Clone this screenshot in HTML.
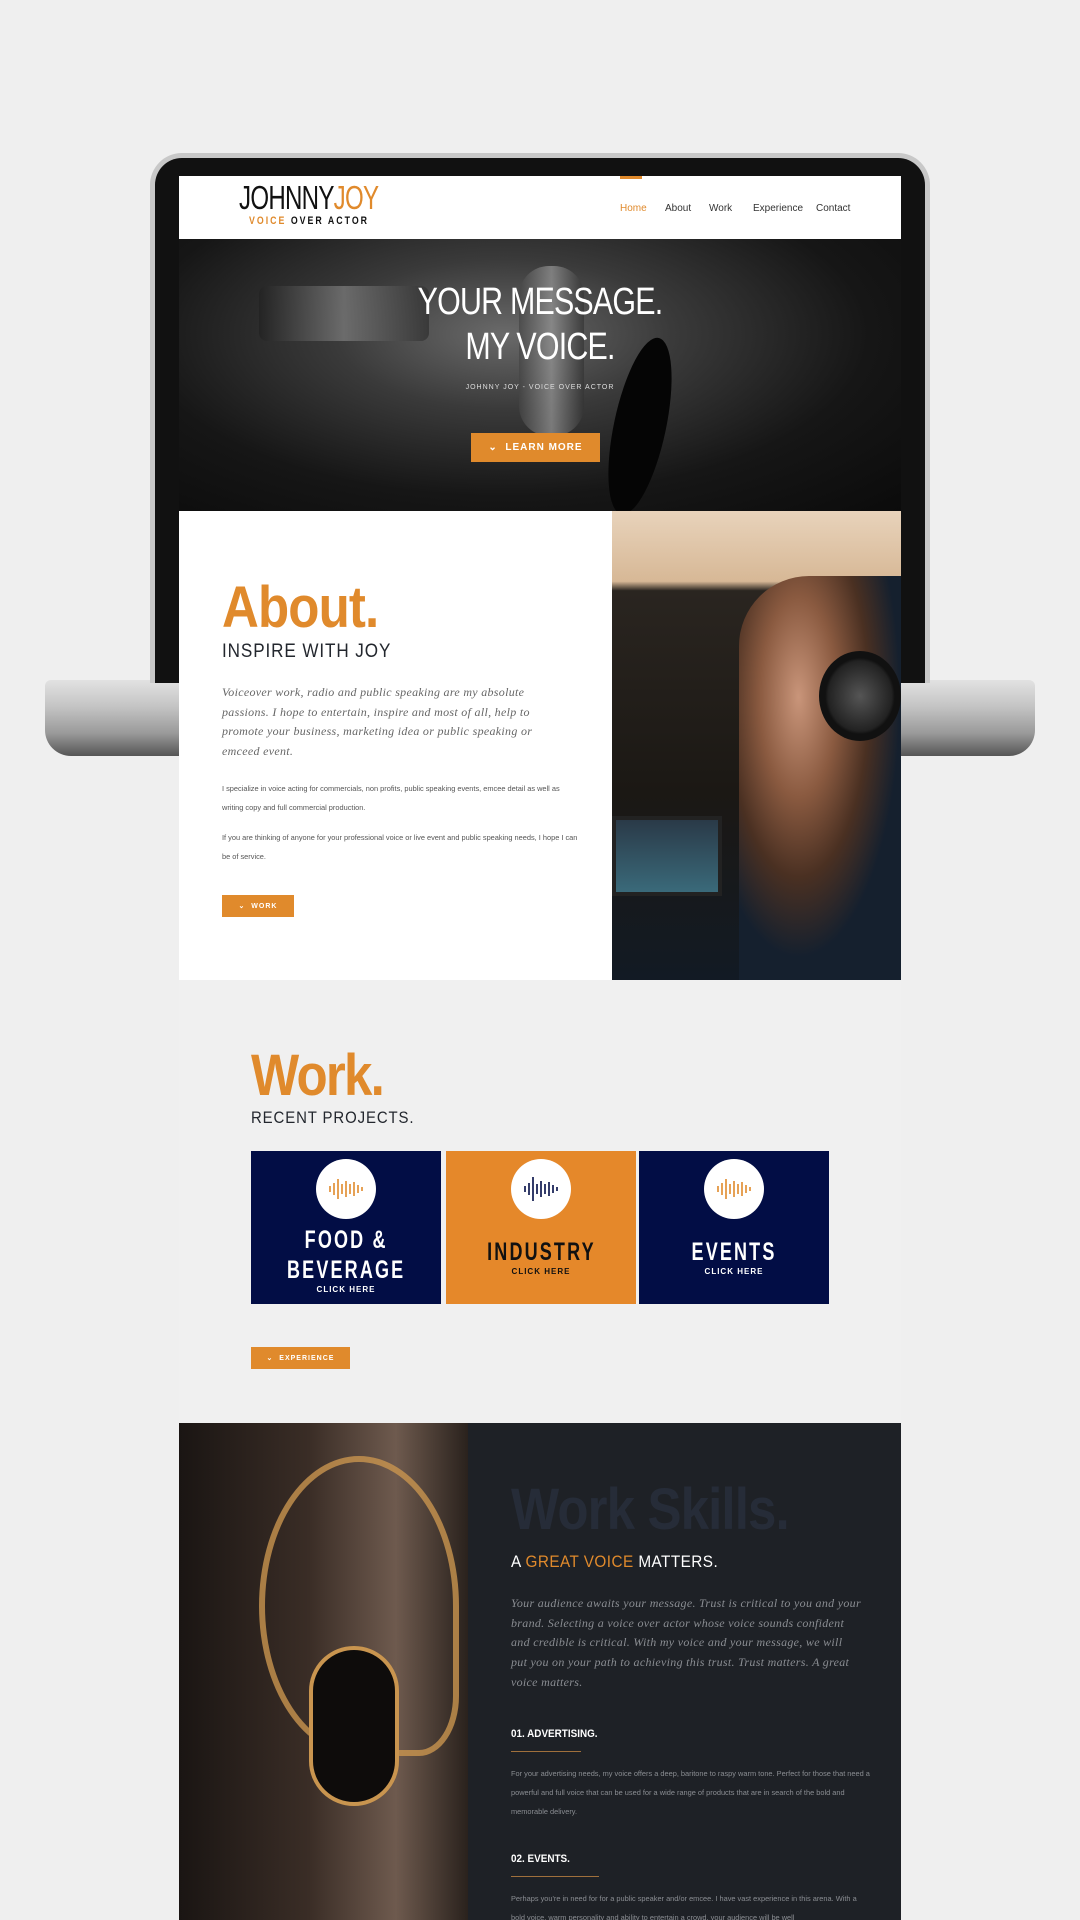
<!DOCTYPE html>
<html><head><meta charset="utf-8">
<style>
*{margin:0;padding:0;box-sizing:border-box}
body{width:1080px;height:1920px;background:#efefef;position:relative;overflow:hidden;font-family:"Liberation Sans",sans-serif}
.abs{position:absolute}
.base{left:45px;top:680px;width:990px;height:76px;border-radius:6px 6px 26px 26px;background:linear-gradient(#e2e2e2 0%,#c4c4c4 35%,#9a9a9a 70%,#555 100%)}
.bezel{left:150px;top:153px;width:780px;height:530px;border-radius:32px 32px 0 0;background:#111;border:5px solid #c8c8c8;border-bottom:none}
.page{left:179px;top:176px;width:722px;height:1744px;background:#fff;overflow:hidden}
.nav{font-size:10px;color:#333;top:27px}
.btn{background:#e08a2c;color:#fff;font-weight:bold;font-size:9px;letter-spacing:1px;display:flex;align-items:center;justify-content:center}
.card{top:975px;width:190px;height:153px;display:flex;flex-direction:column;align-items:center}
.circ{width:60px;height:60px;border-radius:50%;background:#fff;margin-top:8px;display:flex;align-items:center;justify-content:center}
.ct{font-weight:bold;letter-spacing:3px;line-height:30px;text-align:center;transform:scaleX(.72);white-space:nowrap}
.ch{font-size:8px;font-weight:bold;letter-spacing:1px}
.nx{transform-origin:left top;transform:scaleX(.88);white-space:nowrap}
</style></head><body>
<div class="abs base"></div>
<div class="abs bezel"></div>
<div class="abs page">
  <div class="abs" style="left:0;top:0;width:722px;height:63px;background:#fff"></div>
  <div class="abs" style="left:60px;top:5px;font-size:33px;line-height:34px;letter-spacing:-1px;color:#111;transform-origin:left top;transform:scaleX(.73);white-space:nowrap">JOHNNY<span style="color:#e08a2c">JOY</span></div>
  <div class="abs" style="left:70px;top:39px;font-size:11px;font-weight:bold;letter-spacing:2.5px;color:#111;transform-origin:left top;transform:scaleX(.8);white-space:nowrap"><span style="color:#e08a2c">VOICE</span> OVER ACTOR</div>
  <div class="abs" style="left:441px;top:0;width:22px;height:3px;background:#e08a2c"></div>
  <div class="abs nav" style="left:441px;color:#e08a2c">Home</div>
  <div class="abs nav" style="left:486px">About</div>
  <div class="abs nav" style="left:530px">Work</div>
  <div class="abs nav" style="left:574px">Experience</div>
  <div class="abs nav" style="left:637px">Contact</div>
  <div class="abs" style="left:0;top:63px;width:722px;height:272px;background:radial-gradient(ellipse at 45% 35%,#6a6a6a 0%,#3a3a3a 30%,#161616 65%,#0b0b0b 100%)"></div>
  <div class="abs" style="left:80px;top:110px;width:170px;height:55px;background:linear-gradient(90deg,#222,#777 50%,#333);border-radius:8px;opacity:.8"></div>
  <div class="abs" style="left:340px;top:90px;width:65px;height:170px;background:linear-gradient(90deg,#444,#999 50%,#333);border-radius:30px;opacity:.7"></div>
  <div class="abs" style="left:435px;top:160px;width:52px;height:180px;background:#050505;border-radius:50%;transform:rotate(12deg)"></div>
  <div class="abs" style="left:0;top:104px;width:722px;text-align:center;color:#fff;font-size:38px;line-height:45px;letter-spacing:-1px;transform:scaleX(.8)">YOUR MESSAGE.<br>MY VOICE.</div>
  <div class="abs" style="left:0;top:208px;width:722px;text-align:center;color:#ddd;font-size:7px;letter-spacing:1px">JOHNNY JOY - VOICE OVER ACTOR</div>
  <div class="abs btn" style="left:292px;top:257px;width:129px;height:29px;font-size:10px">⌄&nbsp; LEARN MORE</div>
  <div class="abs" style="left:433px;top:335px;width:289px;height:469px;background:linear-gradient(#e8d3bb 0%,#d7b896 15%,#2a2520 17%,#1b1814 60%,#121a24 100%)"></div>
  <div class="abs" style="left:560px;top:400px;width:170px;height:404px;background:radial-gradient(ellipse at 35% 30%,#c9957a 0%,#8a5a40 25%,#4a3022 45%,#15202e 65%);border-radius:70px 0 0 0"></div>
  <div class="abs" style="left:640px;top:475px;width:82px;height:90px;border-radius:50%;background:radial-gradient(#555 0%,#222 55%,#111 60%)"></div>
  <div class="abs" style="left:433px;top:640px;width:110px;height:80px;background:linear-gradient(#2a3a48,#3a6a7a);border:4px solid #222"></div>
  <div class="abs nx" style="left:43px;top:398px;font-size:58px;font-weight:bold;color:#e08a2c;letter-spacing:-1px">About.</div>
  <div class="abs nx" style="left:43px;top:465px;font-size:19px;color:#23272e;letter-spacing:1px;transform:scaleX(.9)">INSPIRE WITH JOY</div>
  <div class="abs" style="left:43px;top:507px;width:330px;font-family:'Liberation Serif',serif;font-style:italic;font-size:12px;line-height:19.6px;color:#666;letter-spacing:.3px">Voiceover work, radio and public speaking are my absolute passions. I hope to entertain, inspire and most of all, help to promote your business, marketing idea or public speaking or emceed event.</div>
  <div class="abs" style="left:43px;top:603px;width:360px;font-size:7.4px;line-height:19px;color:#555">I specialize in voice acting for commercials, non profits, public speaking events, emcee detail as well as writing copy and full commercial production.</div>
  <div class="abs" style="left:43px;top:652px;width:360px;font-size:7.4px;line-height:19px;color:#555">If you are thinking of anyone for your professional voice or live event and public speaking needs, I hope I can be of service.</div>
  <div class="abs btn" style="left:43px;top:719px;width:72px;height:22px;font-size:7px">⌄&nbsp; WORK</div>
  <div class="abs" style="left:0;top:804px;width:722px;height:443px;background:#f0f0f0"></div>
  <div class="abs nx" style="left:72px;top:866px;font-size:58px;font-weight:bold;color:#e08a2c;letter-spacing:-2px">Work.</div>
  <div class="abs nx" style="left:72px;top:932px;font-size:17px;color:#23272e;letter-spacing:1px;transform:scaleX(.88)">RECENT PROJECTS.</div>
  <div class="abs card" style="left:72px;background:#020d45;color:#fff">
    <div class="circ"><svg width="40" height="30" viewBox="0 0 40 30" stroke="#e08a2c" stroke-width="1.6"><path d="M4 12v6M8 9v12M12 5v20M16 10v10M20 7v16M24 10v10M28 8v14M32 11v8M36 13v4"/></svg></div>
    <div class="ct" style="font-size:25px;margin-top:6px">FOOD &amp;<br>BEVERAGE</div><div class="ch">CLICK HERE</div></div>
  <div class="abs card" style="left:267px;background:#e5882a;color:#111">
    <div class="circ"><svg width="40" height="30" viewBox="0 0 40 30" stroke="#020d45" stroke-width="1.6"><path d="M4 12v6M8 9v12M12 3v24M16 10v10M20 7v16M24 10v10M28 8v14M32 11v8M36 13v4"/></svg></div>
    <div class="ct" style="font-size:25px;margin-top:18px">INDUSTRY</div><div class="ch">CLICK HERE</div></div>
  <div class="abs card" style="left:460px;background:#020d45;color:#fff">
    <div class="circ"><svg width="40" height="30" viewBox="0 0 40 30" stroke="#e08a2c" stroke-width="1.6"><path d="M4 12v6M8 9v12M12 5v20M16 10v10M20 7v16M24 10v10M28 8v14M32 11v8M36 13v4"/></svg></div>
    <div class="ct" style="font-size:25px;margin-top:18px">EVENTS</div><div class="ch">CLICK HERE</div></div>
  <div class="abs btn" style="left:72px;top:1171px;width:99px;height:22px;font-size:7px">⌄&nbsp; EXPERIENCE</div>
  <div class="abs" style="left:0;top:1247px;width:289px;height:497px;background:linear-gradient(90deg,#1a1513 0%,#3a2d26 45%,#6e5a4e 75%,#2a221d 100%)"></div>
  <div class="abs" style="left:80px;top:1280px;width:200px;height:300px;border:6px solid #c9954f;border-radius:50% 50% 20% 50%;opacity:.8"></div>
  <div class="abs" style="left:130px;top:1470px;width:90px;height:160px;border-radius:45px;background:#0e0c0b;border:4px solid #c9954f"></div>
  <div class="abs" style="left:289px;top:1247px;width:433px;height:497px;background:#1e2126"></div>
  <div class="abs nx" style="left:332px;top:1300px;font-size:58px;font-weight:bold;color:#262c38;letter-spacing:-1px">Work Skills.</div>
  <div class="abs nx" style="left:332px;top:1376px;font-size:17px;color:#fff;letter-spacing:.5px;transform:scaleX(.9)">A <span style="color:#e08a2c">GREAT VOICE</span> MATTERS.</div>
  <div class="abs" style="left:332px;top:1418px;width:350px;font-family:'Liberation Serif',serif;font-style:italic;font-size:12px;line-height:19.7px;color:#8a8d92;letter-spacing:.3px">Your audience awaits your message. Trust is critical to you and your brand. Selecting a voice over actor whose voice sounds confident and credible is critical. With my voice and your message, we will put you on your path to achieving this trust. Trust matters. A great voice matters.</div>
  <div class="abs nx" style="left:332px;top:1552px;font-size:11px;font-weight:bold;color:#fff;transform:scaleX(.9)">01. ADVERTISING.</div>
  <div class="abs" style="left:332px;top:1575px;width:70px;height:1px;background:#a0703c"></div>
  <div class="abs" style="left:332px;top:1588px;width:360px;font-size:7.4px;line-height:19px;color:#8a8d92">For your advertising needs, my voice offers a deep, baritone to raspy warm tone. Perfect for those that need a powerful and full voice that can be used for a wide range of products that are in search of the bold and memorable delivery.</div>
  <div class="abs nx" style="left:332px;top:1677px;font-size:11px;font-weight:bold;color:#fff;transform:scaleX(.9)">02. EVENTS.</div>
  <div class="abs" style="left:332px;top:1700px;width:88px;height:1px;background:#a0703c"></div>
  <div class="abs" style="left:332px;top:1713px;width:360px;font-size:7.4px;line-height:19px;color:#8a8d92">Perhaps you're in need for for a public speaker and/or emcee. I have vast experience in this arena. With a bold voice, warm personality and ability to entertain a crowd, your audience will be well</div>
</div>
</body></html>
